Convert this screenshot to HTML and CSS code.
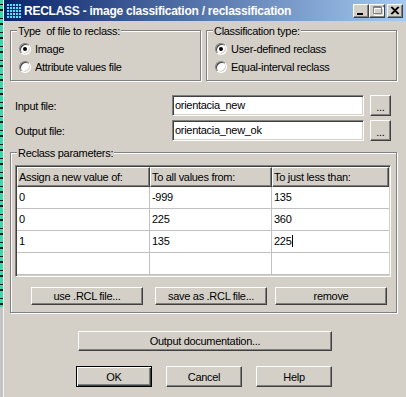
FILE: index.html
```html
<!DOCTYPE html>
<html lang="en">
  <head>
    <meta charset="utf-8" />
    <title>RECLASS</title>
    <link rel="stylesheet" href="styles.css">
  </head>
  <body>
    <div class="desk"></div>
    <div class="window">
      <div class="titlebar">
        <svg class="app-icon" width="14" height="14" viewBox="0 0 14 14">
          <defs>
            <pattern id="dots" width="3" height="3" patternUnits="userSpaceOnUse">
              <rect width="2" height="2" fill="#52e4ff" />
            </pattern>
          </defs>
          <rect width="14" height="14" fill="url(#dots)" />
        </svg>
        <span class="title">RECLASS - image classification / reclassification</span>
        <div class="caption-buttons">
          <span class="cbtn">
            <svg width="14" height="12" viewBox="0 0 14 12"><rect x="3" y="8" width="6" height="2" fill="#000" /></svg>
          </span>
          <span class="cbtn">
            <svg width="14" height="12" viewBox="0 0 14 12">
              <path d="M3.5 1.5h9v8h-9z M3 2.5h9" fill="none" stroke="#fff" transform="translate(1 1)" />
              <path d="M3.5 1.5h8v7h-8z M3 2.5h9" fill="none" stroke="#808080" />
            </svg>
          </span>
          <span class="cbtn close">
            <svg width="14" height="12" viewBox="0 0 14 12">
              <path d="M3 2l7 7M4 2l7 7M10 2l-7 7M11 2l-7 7" stroke="#000" stroke-width="1.1" />
            </svg>
          </span>
        </div>
      </div>

      <div class="content">
        <div class="groups">
          <div class="group">
            <span class="caption">Type&nbsp; of file to reclass:</span>
            <div class="radio-row"><span class="radio checked"></span>Image</div>
            <div class="radio-row"><span class="radio"></span>Attribute values file</div>
          </div>
          <div class="group">
            <span class="caption">Classification type:</span>
            <div class="radio-row"><span class="radio checked"></span>User-defined reclass</div>
            <div class="radio-row"><span class="radio"></span>Equal-interval reclass</div>
          </div>
        </div>

        <div class="field-row first">
          <span class="field-label">Input file:</span>
          <span class="textbox">orientacia_new</span>
          <button class="btn browse">...</button>
        </div>
        <div class="field-row">
          <span class="field-label">Output file:</span>
          <span class="textbox">orientacia_new_ok</span>
          <button class="btn browse">...</button>
        </div>

        <div class="group params">
          <span class="caption">Reclass parameters:</span>
          <div class="grid-frame">
            <div class="grid">
              <div class="head">Assign a new value of:</div>
              <div class="head">To all values from:</div>
              <div class="head">To just less than:</div>

              <div class="cell">0</div>
              <div class="cell">-999</div>
              <div class="cell">135</div>

              <div class="cell">0</div>
              <div class="cell">225</div>
              <div class="cell">360</div>

              <div class="cell">1</div>
              <div class="cell">135</div>
              <div class="cell">225<span class="caret"></span></div>

              <div class="cell"></div>
              <div class="cell"></div>
              <div class="cell"></div>
            </div>
          </div>
          <div class="param-buttons">
            <button class="btn param">use .RCL file...</button>
            <button class="btn param save">save as .RCL file...</button>
            <button class="btn param remove">remove</button>
          </div>
        </div>

        <div class="doc-row">
          <button class="btn doc">Output documentation...</button>
        </div>

        <div class="dialog-buttons">
          <button class="btn dialog default">OK</button>
          <button class="btn dialog">Cancel</button>
          <button class="btn dialog">Help</button>
        </div>
      </div>
    </div>
  </body>
</html>
```

FILE: styles.css
```css
body {
  margin: 0;
  display: flex;
  height: 397px;
  overflow: hidden;
  background: #d4d0c8;
  font: 11px "Liberation Sans", Arial, sans-serif;
  letter-spacing: -0.3px;
  color: #000;
}
button {
  font: inherit;
  letter-spacing: inherit;
  color: inherit;
  padding: 0;
  margin: 0;
}

/* strip of the desktop behind the window */
.desk {
  flex: none;
  width: 3px;
  background:
    linear-gradient(#c4c4c4, #c4c4c4) 0 307px / 3px 90px no-repeat,
    repeating-linear-gradient(#3fd6aa 0 4px, #0d1a16 4px 5px, #3fd6aa 5px 9px, #0d1a16 9px 11px, #3fd6aa 11px 14px);
}
.window {
  flex: 1;
  border-left: 1px solid #f4f4f4;
  display: flex;
  flex-direction: column;
}

/* title bar */
.titlebar {
  height: 21px;
  display: flex;
  align-items: center;
  padding: 0 3px;
  background: linear-gradient(to right, #0a246a, #a6caf0);
}
.app-icon {
  flex: none;
  margin-top: 1px;
}
.title {
  margin-left: 3px;
  color: #fff;
  font-size: 12px;
  font-weight: bold;
  letter-spacing: -0.25px;
  white-space: nowrap;
}
.caption-buttons {
  margin-left: auto;
  display: flex;
}
.cbtn {
  box-sizing: border-box;
  width: 16px;
  height: 14px;
  display: flex;
  background: #d4d0c8;
  border: 1px solid;
  border-color: #fff #404040 #404040 #fff;
  box-shadow: inset -1px -1px #808080;
}
.cbtn.close {
  margin-left: 2px;
}

/* dialog body */
.content {
  padding: 9px 9px 0 6px;
}
.groups {
  display: flex;
  gap: 5px;
}
.group {
  box-sizing: border-box;
  width: 191px;
  display: flex;
  flex-direction: column;
  border: 1px solid #808080;
  box-shadow: inset 1px 1px #fff, 1px 1px #fff;
  padding-bottom: 4px;
}
.caption {
  align-self: flex-start;
  margin: -6px 0 0 6px;
  padding: 0 1px;
  line-height: 13px;
  background: #d4d0c8;
}
.radio-row {
  height: 18px;
  display: flex;
  align-items: center;
  gap: 4px;
  padding-left: 8px;
}
.radio-row:first-of-type {
  margin-top: 2px;
}
.radio {
  box-sizing: border-box;
  width: 12px;
  height: 12px;
  border-radius: 50%;
  background: #fff;
  border: 1px solid;
  border-color: #808080 #fff #fff #808080;
  box-shadow: inset 1px 1px #404040, inset -1px -1px #d4d0c8;
  display: flex;
  align-items: center;
  justify-content: center;
}
.radio.checked::after {
  content: "";
  width: 4px;
  height: 4px;
  border-radius: 50%;
  background: #000;
}

/* file rows */
.field-row {
  height: 21px;
  display: flex;
  align-items: center;
  margin-top: 4px;
}
.field-row.first {
  margin-top: 14px;
}
.field-label {
  width: 157px;
  padding-left: 5px;
}
.textbox {
  box-sizing: border-box;
  width: 192px;
  height: 21px;
  line-height: 19px;
  padding-left: 2px;
  background: #fff;
  border: 1px solid;
  border-color: #808080 #fff #fff #808080;
  box-shadow: inset 1px 1px #404040, inset -1px -1px #d4d0c8;
}
.btn {
  box-sizing: border-box;
  background: #d4d0c8;
  border: 1px solid;
  border-color: #fff #404040 #404040 #fff;
  box-shadow: inset -1px -1px #808080;
}
.browse {
  width: 21px;
  height: 21px;
  margin-left: 6px;
  padding-top: 3px;
}

/* reclass table */
.params {
  width: 387px;
  margin-top: 11px;
  padding-bottom: 7px;
}
.grid-frame {
  width: 376px;
  margin: 5px 0 0 4px;
  box-sizing: border-box;
  border: 1px solid;
  border-color: #808080 #fff #fff #808080;
  box-shadow: inset 1px 1px #404040, inset -1px -1px #d4d0c8;
  padding: 1px;
}
.grid {
  display: grid;
  grid-template-columns: 133px 122px 1fr;
  grid-auto-rows: 22px;
  grid-template-rows: 20px;
  background: #fff;
}
.head {
  box-sizing: border-box;
  padding-left: 1px;
  line-height: 18px;
  background: #d4d0c8;
  border: 1px solid;
  border-color: #fff #404040 #404040 #fff;
  box-shadow: inset -1px -1px #808080;
}
.cell {
  box-sizing: border-box;
  padding-left: 2px;
  line-height: 21px;
  border-bottom: 1px solid #c0c0c0;
}
.cell:nth-child(3n+1),
.cell:nth-child(3n+2) {
  border-right: 1px solid #c0c0c0;
}
.caret {
  display: inline-block;
  width: 1px;
  height: 12px;
  margin-left: 1px;
  vertical-align: -2px;
  background: #000;
}
.param-buttons {
  display: flex;
  margin-top: 10px;
  padding-left: 20px;
}
.param {
  width: 112px;
  height: 18px;
}
.param.save {
  margin-left: 12px;
}
.param.remove {
  margin-left: 8px;
}

/* bottom buttons */
.doc-row {
  display: flex;
  margin-top: 18px;
  padding-left: 68px;
}
.doc {
  width: 254px;
  height: 20px;
}
.dialog-buttons {
  display: flex;
  gap: 14px;
  margin-top: 15px;
  padding-left: 66px;
}
.dialog {
  width: 76px;
  height: 21px;
}
.dialog.default {
  border-color: #000;
  box-shadow: inset 1px 1px #fff, inset -1px -1px #404040, inset -2px -2px #808080;
}
```
